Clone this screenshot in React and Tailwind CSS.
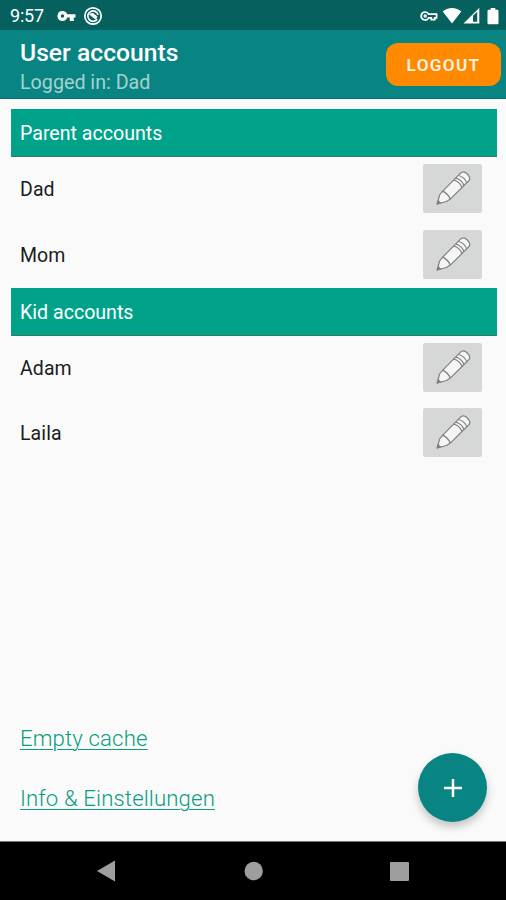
import React from 'react'

const sections = [
  { title: 'Parent accounts', users: ['Dad', 'Mom'] },
  { title: 'Kid accounts', users: ['Adam', 'Laila'] },
]

const StatusBar = () => (
  <div className="flex h-[30px] shrink-0 items-center bg-[#05605e] pl-[10px] pr-[7px] pt-px text-white">
    <span className="w-[47px] pt-px text-[18px] leading-none tracking-[-0.2px]">9:57</span>
    <svg className="h-[12px] w-[19px]" viewBox="0 0 19 12" fill="currentColor">
      <path
        fillRule="evenodd"
        d="M5.5 1a5 5 0 1 0 4.7 6.6h2.600V11h4V7.600H18.500V4.300H10.200A5 5 0 0 0 5.500 1Zm0 3.300a1.700 1.700 0 1 1 0 3.400 1.700 1.700 0 0 1 0-3.400Z"
      />
    </svg>
    <svg className="ml-[7px] h-[20px] w-[20px]" viewBox="0 0 20 20" fill="none" stroke="currentColor">
      <circle cx="10" cy="10" r="8.2" strokeWidth="1.7" />
      <path d="M14.200 13.200A5.200 5.200 0 1 1 15.100 8.900" strokeWidth="1.700" />
      <path d="M6.500 8.200 10 7.500l4 3.200-1.200 2.400-2.800-2Z" fill="currentColor" strokeWidth="1" />
    </svg>
    <div className="ml-auto flex items-center">
      <svg className="h-[12px] w-[18px]" viewBox="0 0 18 12" fill="none" stroke="currentColor" strokeWidth="1.7">
        <path d="M5.200 2a4 4 0 1 0 3.500 5.900h2.600V9.700h3.500V7.800H16.600V4.100H8.700A4 4 0 0 0 5.200 2Z" />
        <circle cx="5.200" cy="6" r="1.100" strokeWidth="1.300" />
      </svg>
      <svg className="ml-[4px] h-[17px] w-[20px]" viewBox="0 0 20 17" fill="currentColor">
        <path d="M10 16.500.700 4.600C3.200 2.200 6.400 1 10 1s6.800 1.200 9.300 3.600Z" />
      </svg>
      <svg className="ml-[1px] h-[17px] w-[17px]" viewBox="0 0 17 17" fill="currentColor">
        <path fillRule="evenodd" d="M.500 16.500 16.300.700v15.800ZM10 8.800v5.900h4.200V4.700Z" />
      </svg>
      <svg className="ml-[7px] h-[18px] w-[12px]" viewBox="0 0 12 18" fill="currentColor">
        <path d="M3.700 1h4.600v1.800h2a1.200 1.200 0 0 1 1.200 1.200v12a1.200 1.200 0 0 1-1.200 1.200H1.700A1.200 1.200 0 0 1 .500 16V4a1.200 1.200 0 0 1 1.200-1.200h2Z" />
      </svg>
    </div>
  </div>
)

const Pencil = () => (
  <svg
    className="mt-px h-[36px] w-[36px]"
    viewBox="0 0 36 36"
    fill="#f5f5f5"
    stroke="#808080"
    strokeWidth="1.2"
    strokeLinejoin="round"
  >
    <path d="M2.200 33 4.600 24 7.500 20.300 25.300 2.300C27.500.300 30.200.900 32.300 3S35.600 7.800 33.800 9.800L15.300 28.100 11.500 30.500Z" />
    <path d="M7.500 20.300C9 20.600 10.500 21.700 12.100 23.200S15 26.400 15.300 28.100" fill="none" strokeWidth="1.500" />
    <path
      d="M18.600 9.200C22.500 9.800 26.200 13.200 26.900 16.700M20.600 7.200C24.500 7.800 28.200 11.200 28.900 14.700M23.300 4.500C27.200 5.100 30.900 8.500 31.600 12"
      fill="none"
    />
    <path d="M2.200 33 3.100 29.700 5.500 32Z" fill="#808080" />
  </svg>
)

const UserRow = ({ name }) => (
  <div className="flex h-[65.25px] items-start justify-between pl-[9px] pr-[15px] pt-[7.300px]">
    <span className="mt-[14px] text-[19.500px] leading-6 tracking-[0.1px] text-[#1c1c1c]">{name}</span>
    <button
      aria-label={`Edit ${name}`}
      className="flex h-[49px] w-[59px] items-center justify-center rounded-[2px] bg-[#d6d7d7]"
    >
      <Pencil />
    </button>
  </div>
)

export default function App() {
  return (
    <div className="flex h-[900px] w-[506px] flex-col overflow-hidden bg-[#fafafa] font-['Roboto',sans-serif]">
      <StatusBar />

      <header className="flex h-[69px] shrink-0 items-start justify-between border-b border-[#08706e] bg-[#088583] pl-5 pr-[5px]">
        <div className="pt-[9px]">
          <h1 className="text-[24.700px] font-medium leading-7 text-white">User accounts</h1>
          <p className="mt-[4px] text-[19.700px] leading-6 text-[#a5d2d0]">Logged in: Dad</p>
        </div>
        <button className="mt-[13px] h-[43px] w-[115px] rounded-[12px] bg-[#ff8a00] pt-[2px] text-[17.200px] font-semibold tracking-[1.3px] text-[#fff3e4]">
          LOGOUT
        </button>
      </header>

      <main className="flex min-h-0 flex-1 flex-col pt-[10px]">
        {sections.map((section) => (
          <section key={section.title} className="ml-[11px] mr-[9px]">
            <h2 className="h-[48px] border-b border-[#3f7468] bg-[#00a38a] pl-[9px] pt-px text-[19.600px] leading-[47px] text-white">
              {section.title}
            </h2>
            {section.users.map((name) => (
              <UserRow key={name} name={name} />
            ))}
          </section>
        ))}

        <div className="mt-auto flex items-end justify-between pb-[19px] pl-5 pr-[19px]">
          <div className="flex flex-col items-start gap-[32px] pb-[10px] text-[22.200px] font-light leading-7 tracking-[0.13px] text-[#0a9d7f] underline decoration-1 underline-offset-[3px]">
            <a href="#cache">Empty cache</a>
            <a href="#info">Info &amp; Einstellungen</a>
          </div>
          <button
            aria-label="Add account"
            className="flex h-[69px] w-[69px] items-center justify-center rounded-full bg-[#088583] shadow-[0_5px_9px_rgba(0,0,0,0.22)]"
          >
            <svg className="h-[18px] w-[18px]" viewBox="0 0 18 18" stroke="#fff" strokeWidth="2.500">
              <path d="M9 0v18M0 9h18" />
            </svg>
          </button>
        </div>
      </main>

      <nav className="h-[59px] shrink-0 border-t border-[#777777] bg-black">
        <svg className="h-[58px] w-[506px]" viewBox="0 0 506 58" fill="#9e9e9e">
          <path d="M97 29 115 18.500v21Z" />
          <circle cx="253.700" cy="29" r="9.200" />
          <rect x="390" y="20" width="19" height="19" rx="1" />
        </svg>
      </nav>
    </div>
  )
}
